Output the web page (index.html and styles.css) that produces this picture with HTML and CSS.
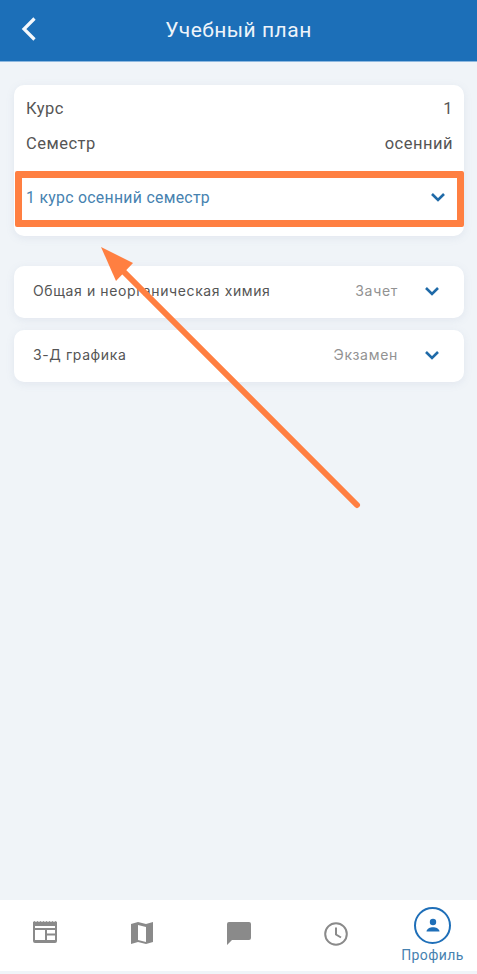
FILE: index.html
```html
<!DOCTYPE html>
<html lang="ru">
<head>
    <meta charset="UTF-8">
    <meta name="viewport" content="width=device-width, initial-scale=1.0">
    <title>Учебный план</title>
    <link rel="stylesheet" href="styles.css">
</head>
<body>
    <div class="app">
        <header class="topbar">
            <svg class="back-icon" width="18" height="28" viewBox="0 0 18 28"><path d="M15.500 3.500 L5 14 L15.500 24.500" fill="none" stroke="#f4f8fc" stroke-width="3.200"/></svg>
            <h1>Учебный план</h1>
        </header>

        <main class="content">
            <section class="card plan-card">
                <div class="info-row"><span>Курс</span><span>1</span></div>
                <div class="info-row"><span>Семестр</span><span>осенний</span></div>
                <div class="select-row">
                    <span>1 курс осенний семестр</span>
                    <svg class="chevron" width="16" height="10" viewBox="0 0 16 10"><path d="M2 2 L8 8 L14 2" fill="none" stroke="#1f6aa8" stroke-width="2.600"/></svg>
                </div>
            </section>

            <section class="subjects">
                <div class="card subject">
                    <span class="subject-name">Общая и неорганическая химия</span>
                    <span class="subject-type">Зачет</span>
                    <svg class="chevron" width="16" height="10" viewBox="0 0 16 10"><path d="M2 2 L8 8 L14 2" fill="none" stroke="#1f6aa8" stroke-width="2.600"/></svg>
                </div>
                <div class="card subject">
                    <span class="subject-name">3-Д графика</span>
                    <span class="subject-type">Экзамен</span>
                    <svg class="chevron" width="16" height="10" viewBox="0 0 16 10"><path d="M2 2 L8 8 L14 2" fill="none" stroke="#1f6aa8" stroke-width="2.600"/></svg>
                </div>
            </section>
        </main>

        <nav class="tabbar">
            <div class="tab">
                <svg width="24" height="22" viewBox="0 0 24 22"><path fill="#8a8a8a" fill-rule="evenodd" d="M0 1l1.500-1 1.500 1 1.500-1 1.500 1 1.500-1 1.500 1 1.500-1 1.500 1 1.500-1 1.500 1 1.500-1 1.500 1 1.500-1 1.500 1 1.500-1 1.500 1v19a2 2 0 0 1-2 2H2a2 2 0 0 1-2-2z M2 5v2h20V5z M2 9v10h10V9z M14 9v3.500h8V9z M14 14.500V19h8v-4.500z"/></svg>
            </div>
            <div class="tab">
                <svg width="24" height="24" viewBox="0 0 24 24"><path fill="#8a8a8a" fill-rule="evenodd" d="M1 3l7-2 8 2 7-2v20l-7 2-8-2-7 2z M8 4v15l8 2V6z"/></svg>
            </div>
            <div class="tab">
                <svg width="26" height="24" viewBox="0 0 26 24"><path fill="#8a8a8a" d="M3 1h20a2 2 0 0 1 2 2v14a2 2 0 0 1-2 2H6l-5 5V3a2 2 0 0 1 2-2z"/></svg>
            </div>
            <div class="tab">
                <svg width="26" height="26" viewBox="0 0 26 26"><circle cx="13" cy="13" r="10.800" fill="none" stroke="#8a8a8a" stroke-width="2"/><path d="M13 6.500V13.500L18 16.500" fill="none" stroke="#8a8a8a" stroke-width="2"/></svg>
            </div>
            <div class="tab tab-active">
                <span class="avatar">
                    <svg width="16" height="16" viewBox="0 0 16 16"><circle cx="8" cy="4" r="3.200" fill="#1f6fb8"/><path fill="#1f6fb8" d="M1.500 13.500c0-2.800 3.800-4.300 6.500-4.300s6.500 1.500 6.500 4.300z"/></svg>
                </span>
                <span class="tab-label">Профиль</span>
            </div>
        </nav>

        <!-- пометки поверх скриншота -->
        <div class="mark-box"></div>
        <svg class="mark-arrow" width="477" height="974" viewBox="0 0 477 974">
            <path d="M357 505 L120 268" fill="none" stroke="#ff7f41" stroke-width="6" stroke-linecap="round"/>
            <path d="M101 247 L133 263 L116 281 Z" fill="#ff7f41"/>
        </svg>
    </div>
</body>
</html>
```

FILE: styles.css
```css
* {
    box-sizing: border-box;
}

body {
    margin: 0;
    font-family: Roboto, "Liberation Sans", sans-serif;
    background-color: #f0f4f8;
}

.app {
    position: relative;
    width: 477px;
    height: 974px;
    overflow: hidden;
    display: flex;
    flex-direction: column;
}

/* Шапка */
.topbar {
    height: 62px;
    flex-shrink: 0;
    position: relative;
    display: flex;
    align-items: center;
    justify-content: center;
    background-color: #1c6fb8;
    border-bottom: 1px solid #8db8df;
    padding-bottom: 2px;
}

.topbar h1 {
    margin: 0;
    font-size: 21px;
    font-weight: 400;
    letter-spacing: 0.5px;
    color: #eef4fa;
}

.back-icon {
    position: absolute;
    left: 19px;
    top: 15px;
}

/* Основная часть */
.content {
    flex: 1;
    padding: 23px 13px 0 14px;
}

.card {
    background-color: #fff;
    border-radius: 10px;
    box-shadow: 0 2px 8px rgba(120, 140, 170, 0.12);
}

.plan-card {
    height: 151px;
    padding: 6px 11px 0 12px;
}

.info-row {
    height: 35px;
    display: flex;
    align-items: center;
    justify-content: space-between;
    font-size: 16.500px;
    letter-spacing: 0.5px;
    color: #555;
}

.select-row {
    height: 34px;
    margin-top: 19px;
    padding-right: 7px;
    display: flex;
    align-items: center;
    justify-content: space-between;
    font-size: 15.800px;
    letter-spacing: 0.3px;
    color: #4682b0;
}

.subjects {
    margin-top: 30px;
    display: flex;
    flex-direction: column;
    gap: 12px;
}

.subject {
    height: 52px;
    padding: 0 24px 4px 19px;
    display: flex;
    align-items: center;
    font-family: Inter, Roboto, sans-serif;
    font-size: 14px;
    letter-spacing: 0.6px;
}

.subject-name {
    flex: 1;
    color: #555;
}

.subject-type {
    margin-right: 26px;
    letter-spacing: 0.7px;
    color: #929292;
}

.subject .chevron {
    margin-top: 1px;
}

/* Нижнее меню */
.tabbar {
    height: 71px;
    flex-shrink: 0;
    margin-bottom: 3px;
    display: grid;
    grid-template-columns: repeat(5, 97px);
    justify-content: center;
    background-color: #fff;
}

.tab {
    display: flex;
    flex-direction: column;
    align-items: center;
    padding-top: 21px;
}

.tab-active {
    padding-top: 7px;
}

.avatar {
    width: 37px;
    height: 37px;
    display: flex;
    align-items: center;
    justify-content: center;
    border: 2.500px solid #1f6fb8;
    border-radius: 50%;
}

.tab-label {
    margin-top: 3px;
    font-size: 14px;
    letter-spacing: 0.4px;
    color: #4682b0;
    white-space: nowrap;
}

/* Пометки */
.mark-box {
    position: absolute;
    left: 15px;
    top: 171px;
    width: 449px;
    height: 56px;
    border: 7px solid #ff7f41;
    border-radius: 2px;
}

.mark-arrow {
    position: absolute;
    left: 0;
    top: 0;
}
```
